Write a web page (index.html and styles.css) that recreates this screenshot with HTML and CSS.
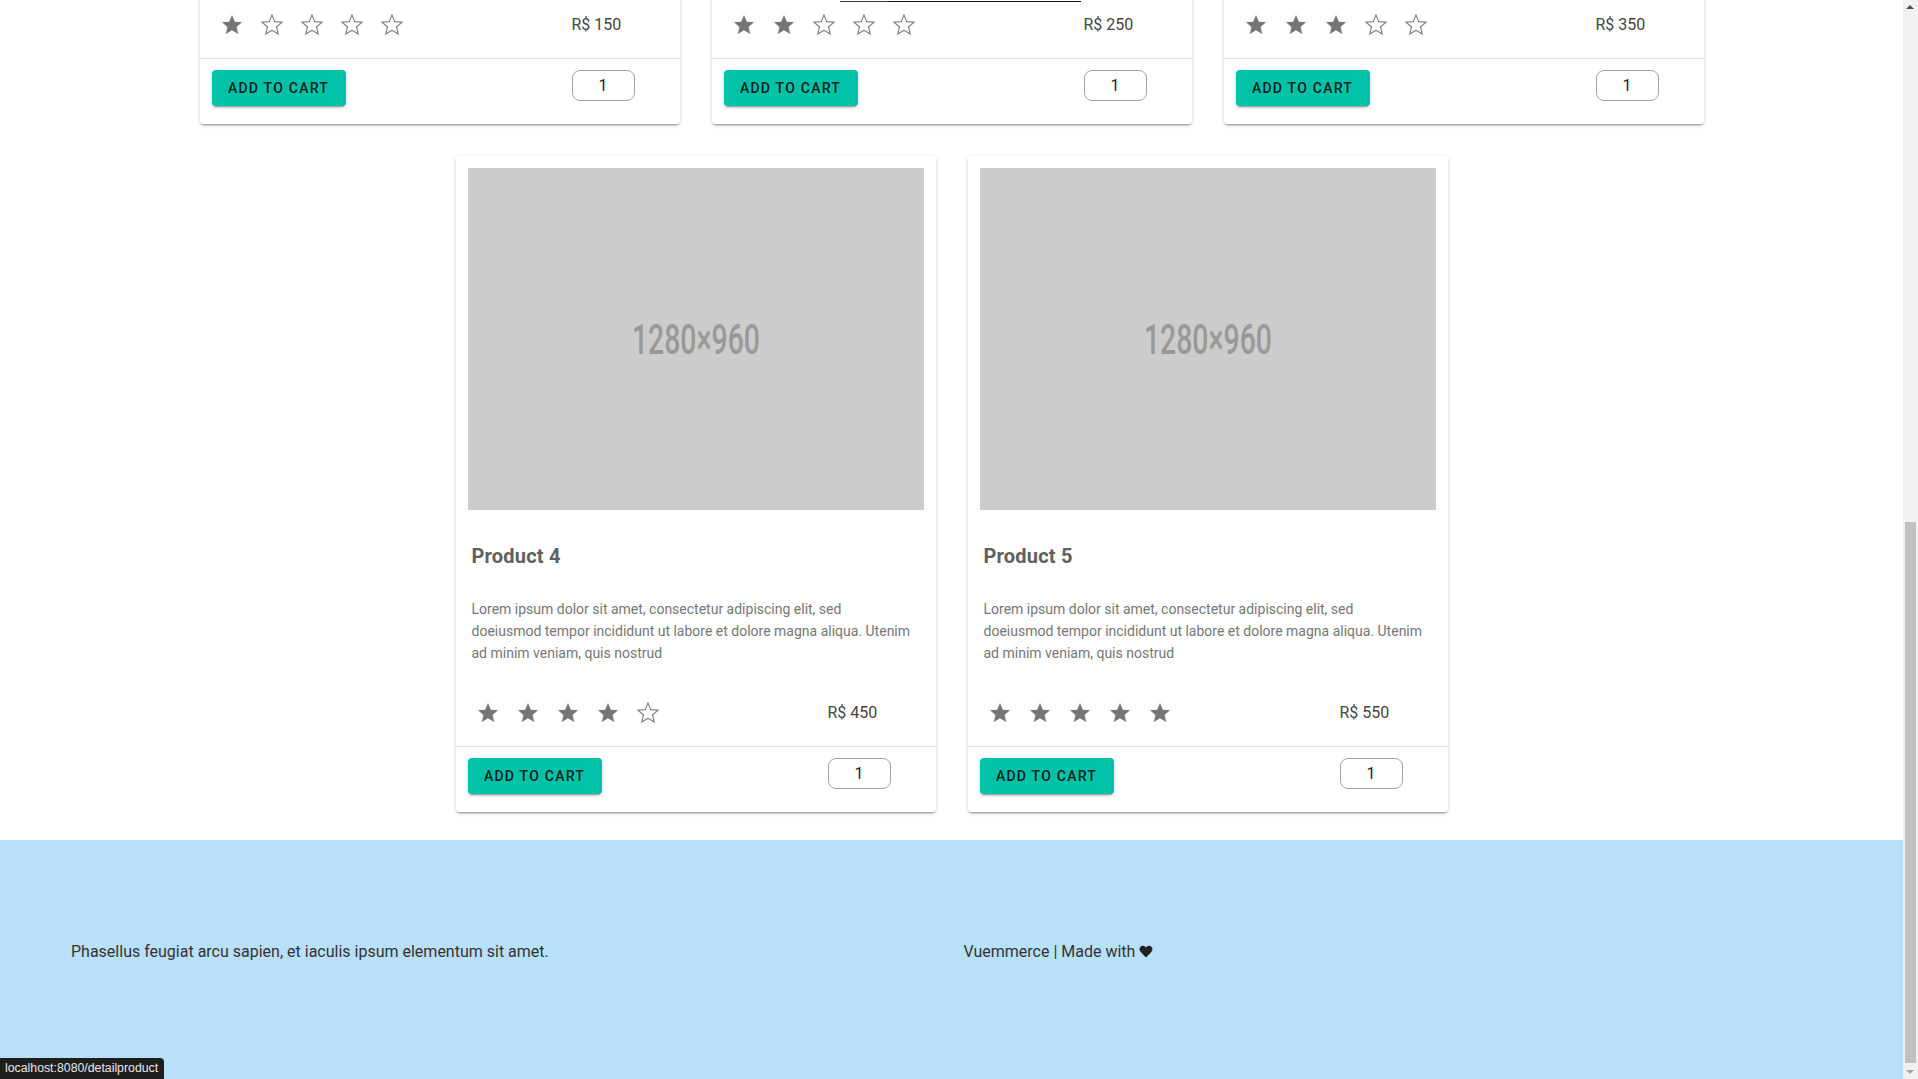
FILE: index.html
```html
<!DOCTYPE html>
<html lang="en">
<head>
<meta charset="utf-8">
<title>Vuemmerce</title>
<link rel="stylesheet" href="styles.css">
</head>
<body>
<svg class="defs" width="0" height="0" aria-hidden="true">
  <defs>
    <symbol id="star-full" viewBox="0 0 24 24"><path d="M12 17.27L18.18 21l-1.64-7.03L22 9.24l-7.19-.61L12 2 9.19 8.63 2 9.24l5.46 4.73L5.82 21z" fill="#757575"/></symbol>
    <symbol id="star-empty" viewBox="0 0 24 24"><path d="M12 17.27L18.18 21l-1.64-7.03L22 9.24l-7.19-.61L12 2 9.19 8.63 2 9.24l5.46 4.73L5.82 21z" fill="none" stroke="#808080" stroke-width="1.15" stroke-linejoin="miter"/></symbol>
  </defs>
</svg>

<div class="page-top"></div>

<main class="products">
  <article class="card">
    <div class="card-image"><span class="ph-text">1280×960</span></div>
    <h2 class="card-title">Product 1</h2>
    <p class="card-desc">Lorem ipsum dolor sit amet, consectetur adipiscing elit, sed<br>doeiusmod tempor incididunt ut labore et dolore magna aliqua. Utenim ad minim veniam, quis nostrud</p>
    <div class="rating-row">
      <div class="stars">
        <svg class="star"><use href="#star-full"/></svg>
        <svg class="star"><use href="#star-empty"/></svg>
        <svg class="star"><use href="#star-empty"/></svg>
        <svg class="star"><use href="#star-empty"/></svg>
        <svg class="star"><use href="#star-empty"/></svg>
      </div>
      <span class="price">R$ 150</span>
    </div>
    <div class="card-actions">
      <button class="btn-cart" type="button">Add to cart</button>
      <input class="qty" type="text" value="1">
    </div>
  </article>

  <article class="card">
    <div class="card-image"><span class="ph-text">1280×960</span></div>
    <h2 class="card-title">Product 2</h2>
    <p class="card-desc">Lorem ipsum dolor sit amet, consectetur adipiscing elit, sed<br>doeiusmod tempor incididunt ut labore et dolore magna aliqua. Utenim ad minim veniam, quis nostrud</p>
    <div class="rating-row">
      <div class="stars">
        <svg class="star"><use href="#star-full"/></svg>
        <svg class="star"><use href="#star-full"/></svg>
        <svg class="star"><use href="#star-empty"/></svg>
        <svg class="star"><use href="#star-empty"/></svg>
        <svg class="star"><use href="#star-empty"/></svg>
      </div>
      <span class="price">R$ 250</span>
    </div>
    <div class="card-actions">
      <button class="btn-cart" type="button">Add to cart</button>
      <input class="qty" type="text" value="1">
    </div>
    <div class="hover-line"></div>
  </article>

  <article class="card">
    <div class="card-image"><span class="ph-text">1280×960</span></div>
    <h2 class="card-title">Product 3</h2>
    <p class="card-desc">Lorem ipsum dolor sit amet, consectetur adipiscing elit, sed<br>doeiusmod tempor incididunt ut labore et dolore magna aliqua. Utenim ad minim veniam, quis nostrud</p>
    <div class="rating-row">
      <div class="stars">
        <svg class="star"><use href="#star-full"/></svg>
        <svg class="star"><use href="#star-full"/></svg>
        <svg class="star"><use href="#star-full"/></svg>
        <svg class="star"><use href="#star-empty"/></svg>
        <svg class="star"><use href="#star-empty"/></svg>
      </div>
      <span class="price">R$ 350</span>
    </div>
    <div class="card-actions">
      <button class="btn-cart" type="button">Add to cart</button>
      <input class="qty" type="text" value="1">
    </div>
  </article>

  <article class="card">
    <div class="card-image"><span class="ph-text">1280×960</span></div>
    <h2 class="card-title">Product 4</h2>
    <p class="card-desc">Lorem ipsum dolor sit amet, consectetur adipiscing elit, sed<br>doeiusmod tempor incididunt ut labore et dolore magna aliqua. Utenim ad minim veniam, quis nostrud</p>
    <div class="rating-row">
      <div class="stars">
        <svg class="star"><use href="#star-full"/></svg>
        <svg class="star"><use href="#star-full"/></svg>
        <svg class="star"><use href="#star-full"/></svg>
        <svg class="star"><use href="#star-full"/></svg>
        <svg class="star"><use href="#star-empty"/></svg>
      </div>
      <span class="price">R$ 450</span>
    </div>
    <div class="card-actions">
      <button class="btn-cart" type="button">Add to cart</button>
      <input class="qty" type="text" value="1">
    </div>
  </article>

  <article class="card">
    <div class="card-image"><span class="ph-text">1280×960</span></div>
    <h2 class="card-title">Product 5</h2>
    <p class="card-desc">Lorem ipsum dolor sit amet, consectetur adipiscing elit, sed<br>doeiusmod tempor incididunt ut labore et dolore magna aliqua. Utenim ad minim veniam, quis nostrud</p>
    <div class="rating-row">
      <div class="stars">
        <svg class="star"><use href="#star-full"/></svg>
        <svg class="star"><use href="#star-full"/></svg>
        <svg class="star"><use href="#star-full"/></svg>
        <svg class="star"><use href="#star-full"/></svg>
        <svg class="star"><use href="#star-full"/></svg>
      </div>
      <span class="price">R$ 550</span>
    </div>
    <div class="card-actions">
      <button class="btn-cart" type="button">Add to cart</button>
      <input class="qty" type="text" value="1">
    </div>
  </article>
</main>

<footer class="site-footer">
  <p>Phasellus feugiat arcu sapien, et iaculis ipsum elementum sit amet.</p>
  <p>Vuemmerce | Made with <svg class="heart" viewBox="0 0 512 512" aria-hidden="true"><path d="M462.3 62.6C407.5 15.9 326 24.3 275.7 76.2L256 96.5l-19.7-20.3C186.1 24.3 104.5 15.9 49.7 62.6c-62.8 53.6-66.1 149.8-9.9 207.9l193.5 199.8c12.5 12.9 32.8 12.9 45.3 0l193.5-199.8c56.3-58.1 53-154.3-9.8-207.9z" fill="#222"/></svg></p>
</footer>

<div class="scrollbar" aria-hidden="true">
  <span class="sb-arrow sb-up"></span>
  <span class="sb-thumb"></span>
  <span class="sb-arrow sb-down"></span>
</div>

<div class="status-bubble">localhost:8080/detailproduct</div>

<script src="script.js"></script>
</body>
</html>
```

FILE: styles.css
```css
* {
  box-sizing: border-box;
}

html {
  scroll-behavior: auto;
}

body {
  margin: 0 15px 0 0;
  background: #ffffff;
  color: #333333;
  font-family: Roboto, "Noto Sans", "Liberation Sans", sans-serif;
}

.defs {
  position: absolute;
  width: 0;
  height: 0;
  overflow: hidden;
}

.page-top {
  height: 476px;
}

.products {
  width: 1504px;
  margin: 0 auto;
  padding-bottom: 28px;
  display: flex;
  flex-wrap: wrap;
  justify-content: center;
  gap: 32px;
}

.card {
  position: relative;
  width: 480px;
  background: #ffffff;
  border-radius: 4px;
  box-shadow: 0 3px 1px -2px rgba(0, 0, 0, 0.2), 0 2px 2px 0 rgba(0, 0, 0, 0.14), 0 1px 5px 0 rgba(0, 0, 0, 0.12);
}

.card-image {
  margin: 12px 12px 0;
  height: 342px;
  background: #cccccc;
  display: flex;
  align-items: center;
  justify-content: center;
  overflow: hidden;
}

.ph-text {
  display: block;
  font-family: Roboto, sans-serif;
  font-size: 43px;
  font-weight: 500;
  line-height: 1;
  color: #999999;
  transform: scaleX(0.66);
}

.card-title {
  margin: 30px 0 0;
  padding: 0 16px;
  font-size: 20px;
  line-height: 32px;
  font-weight: 700;
  letter-spacing: 0.2px;
  color: #606060;
}

.card-desc {
  margin: 26px 0 0;
  padding: 0 10px 0 16px;
  font-size: 14px;
  line-height: 22px;
  color: #767676;
}

.rating-row {
  margin: 25px 0 9px;
  height: 48px;
  padding-left: 20px;
  display: grid;
  grid-template-columns: 1fr 108px;
  align-items: center;
}

.stars {
  display: flex;
  gap: 16px;
}

.star {
  display: block;
  width: 24px;
  height: 24px;
}

.price {
  font-size: 16px;
  line-height: 24px;
  color: #444444;
}

.card-actions {
  border-top: 1px solid #e0e0e0;
  padding: 11px 0 18px 12px;
  display: grid;
  grid-template-columns: 1fr 108px;
  align-items: start;
}

.btn-cart {
  justify-self: start;
  width: 134px;
  height: 36px;
  padding: 0 16px;
  border: none;
  border-radius: 4px;
  background: #00c2a8;
  color: rgba(0, 0, 0, 0.87);
  font-family: Roboto, sans-serif;
  font-size: 14px;
  font-weight: 500;
  letter-spacing: 1.25px;
  text-transform: uppercase;
  box-shadow: 0 3px 1px -2px rgba(0, 0, 0, 0.2), 0 2px 2px 0 rgba(0, 0, 0, 0.14), 0 1px 5px 0 rgba(0, 0, 0, 0.12);
  cursor: pointer;
}

.qty {
  width: 63px;
  height: 31px;
  padding: 0;
  border: 1px solid #a3a3a3;
  border-radius: 8px;
  background: #ffffff;
  text-align: center;
  font-family: Roboto, sans-serif;
  font-size: 16px;
  color: #222222;
  outline: none;
}

.hover-line {
  position: absolute;
  top: 533px;
  left: 128px;
  width: 241px;
  height: 1px;
  background: linear-gradient(to right, #3c3c3c 0 48px, #111111 48px 100%);
}

.site-footer {
  height: 239px;
  padding: 100px 59px 0;
  background: #b9e0f9;
  display: grid;
  grid-template-columns: 1fr 1fr;
  align-items: start;
}

.site-footer p {
  margin: 0;
  padding: 0 12px;
  font-size: 16px;
  line-height: 24px;
  color: #333333;
}

.heart {
  width: 14px;
  height: 13px;
  vertical-align: -1px;
}

/* window scrollbar, drawn over the right edge of the page */
.scrollbar {
  position: fixed;
  top: 0;
  right: 0;
  width: 15px;
  height: 100vh;
  background: #f1f1f1;
}

.sb-thumb {
  position: absolute;
  top: 522px;
  left: 2px;
  right: 2px;
  height: 541px;
  background: #c1c1c1;
}

.sb-arrow {
  position: absolute;
  left: 3px;
  width: 0;
  height: 0;
  border-left: 4.5px solid transparent;
  border-right: 4.5px solid transparent;
}

.sb-up {
  top: 5px;
  border-bottom: 4px solid #505050;
}

.sb-down {
  bottom: 5px;
  border-top: 4px solid #a3a3a3;
}

.status-bubble {
  position: fixed;
  left: 0;
  bottom: 0;
  height: 21px;
  padding: 0 6px 0 5px;
  background: #1f1f1f;
  border-top-right-radius: 4px;
  color: #e8e8e8;
  font-family: "Liberation Sans", Arial, sans-serif;
  font-size: 12.3px;
  line-height: 21px;
  white-space: nowrap;
}
```

FILE: script.js
```js
function scrollToPageEnd() {
  window.scrollTo(0, document.documentElement.scrollHeight);
}
scrollToPageEnd();
window.addEventListener('load', scrollToPageEnd);
```
